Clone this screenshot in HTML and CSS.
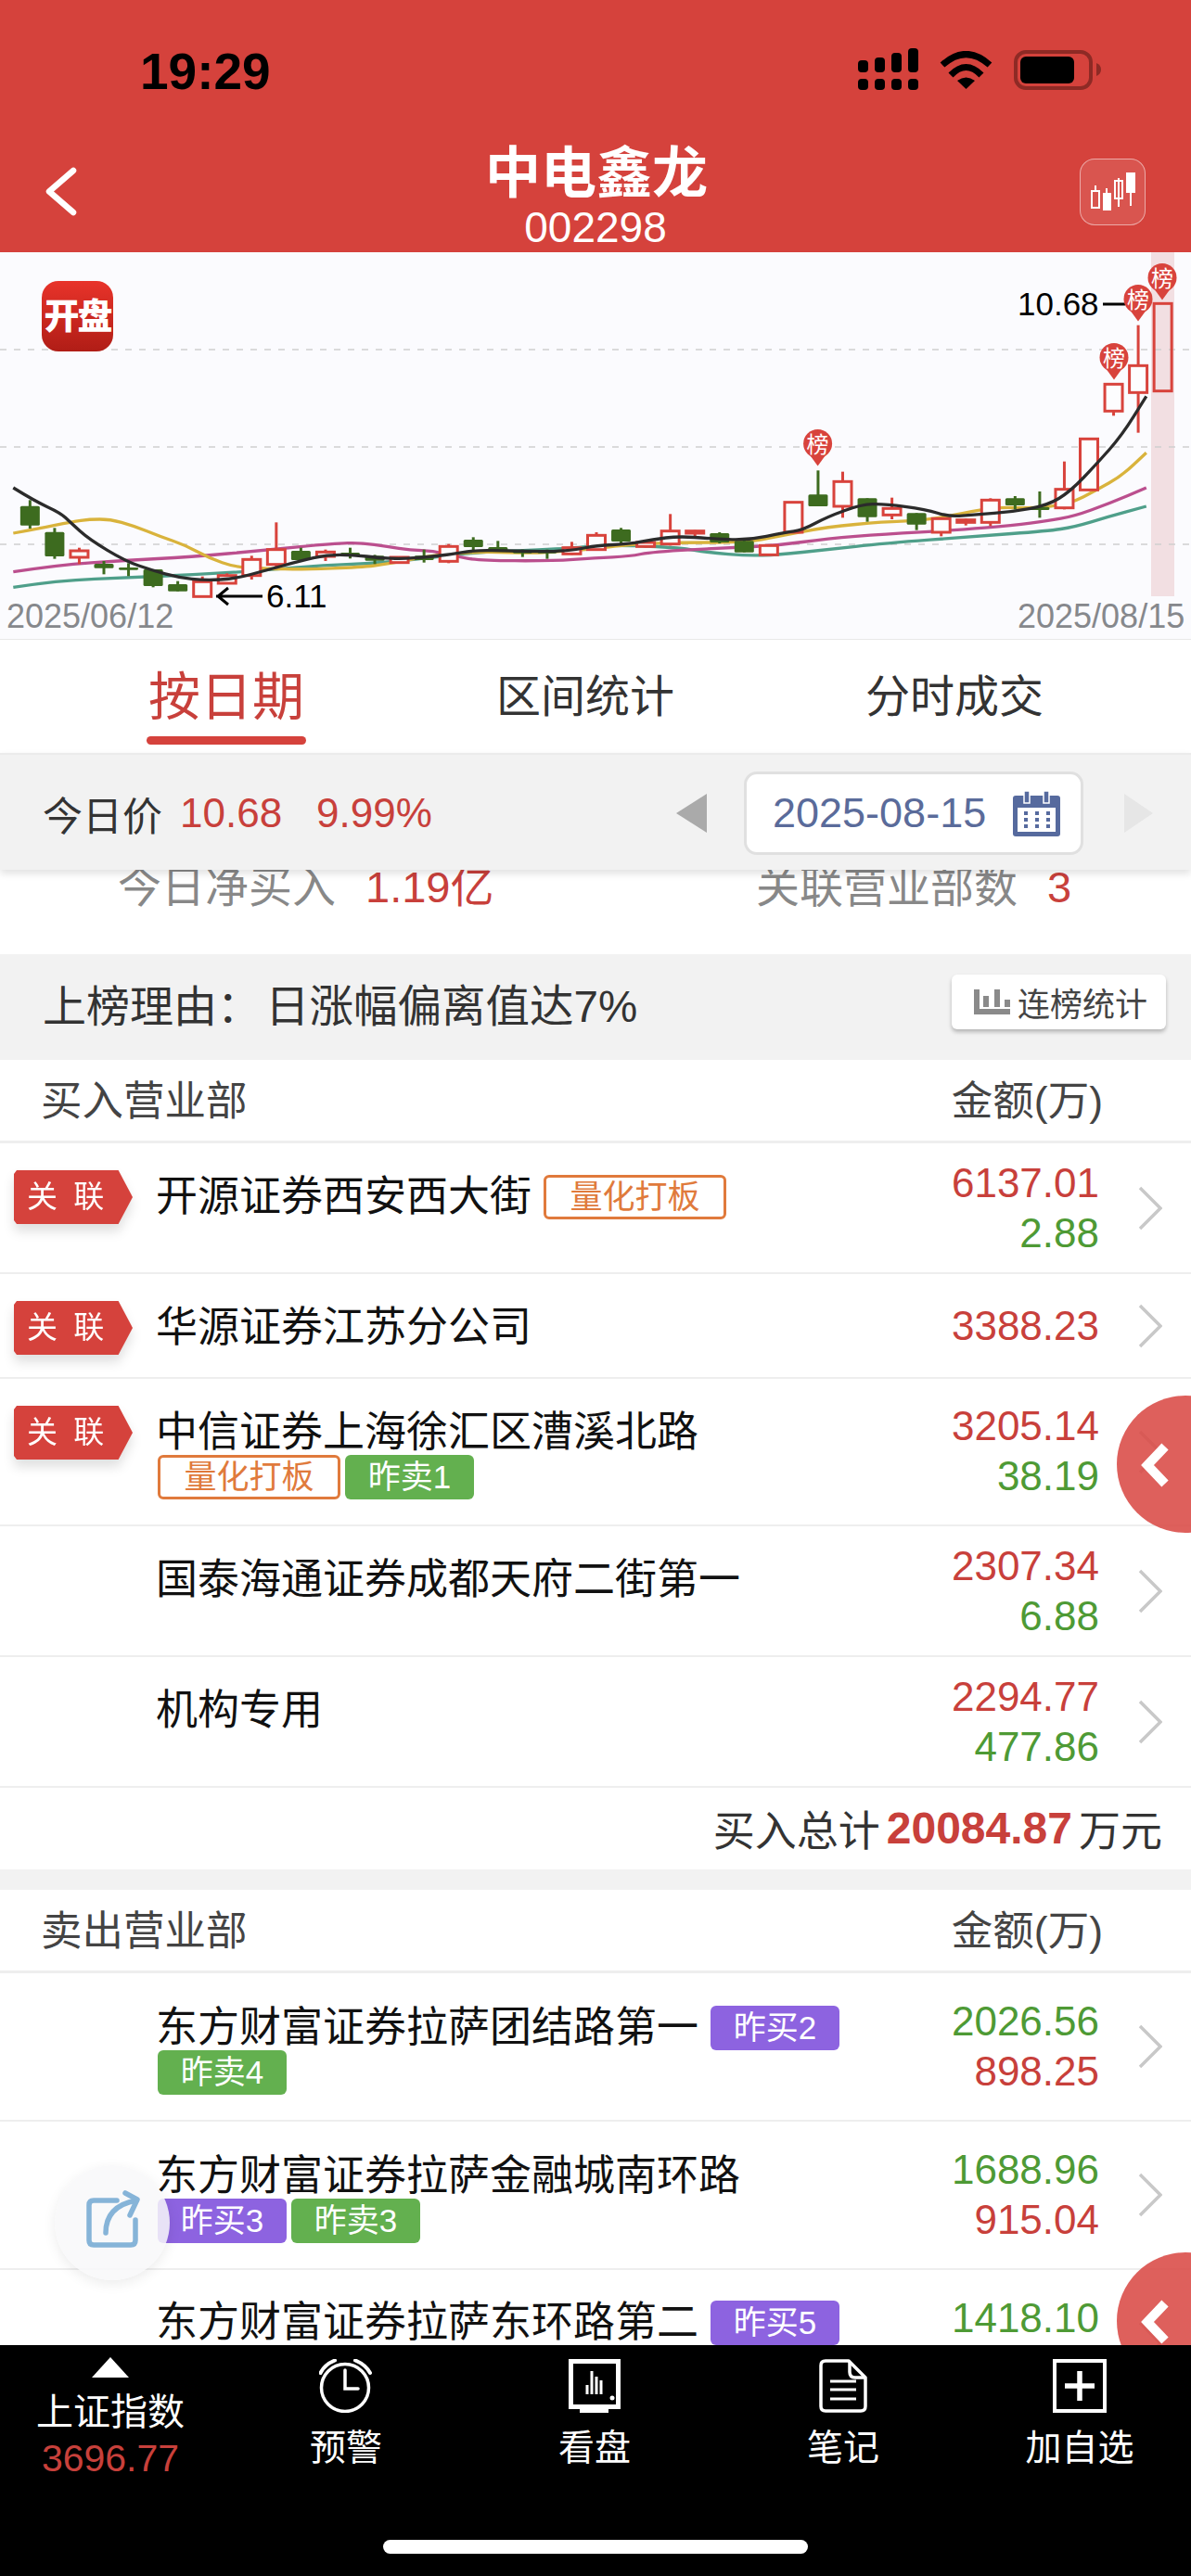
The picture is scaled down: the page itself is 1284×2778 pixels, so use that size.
FILE: index.html
```html
<!DOCTYPE html>
<html lang="zh-CN">
<head>
    <meta charset="UTF-8">
    <meta name="viewport" content="width=device-width, initial-scale=1.0">
    <title>中电鑫龙 002298</title>
    <link rel="stylesheet" href="styles.css">
</head>
<body>
    <header class="top">
        <div class="status">
            <span class="time">19:29</span>
            <svg class="ic-signal" width="66" height="46" viewBox="0 0 66 46">
                <rect x="0" y="33" width="11" height="12" rx="4"/><rect x="18" y="33" width="11" height="12" rx="4"/>
                <rect x="36" y="33" width="11" height="12" rx="4"/><rect x="54" y="33" width="11" height="12" rx="4"/>
                <rect x="0" y="13" width="11" height="13" rx="4"/><rect x="18" y="10" width="11" height="16" rx="4"/>
                <rect x="36" y="5" width="11" height="21" rx="4"/><rect x="54" y="0" width="11" height="26" rx="4"/>
            </svg>
            <svg class="ic-wifi" width="57" height="41" viewBox="0 0 57 41">
                <path d="M3 15 Q28.500 -8 54 15" fill="none" stroke="#000" stroke-width="7"/>
                <path d="M12 26 Q28.500 9 45 26" fill="none" stroke="#000" stroke-width="7"/>
                <path d="M19 32 Q28.500 25 38 32 L28.500 41 Z"/>
            </svg>
            <svg class="ic-battery" width="94" height="43" viewBox="0 0 94 43">
                <rect x="2" y="2" width="81" height="39" rx="11" fill="none" stroke="#8e2a25" stroke-width="4"/>
                <rect x="7" y="7" width="58" height="29" rx="6"/>
                <path d="M89 14 Q94 16 94 21 Q94 26 89 28 Z" fill="#8e2a25"/>
            </svg>
        </div>
        <div class="nav">
            <svg class="back" width="37" height="53" viewBox="0 0 37 53">
                <path d="M32 4 L6 26.500 L32 49" fill="none" stroke="#fff" stroke-width="6.500" stroke-linecap="round" stroke-linejoin="round"/>
            </svg>
            <div class="title">
                <div class="stock-name">中电鑫龙</div>
                <div class="stock-code">002298</div>
            </div>
            <div class="kline-btn">
                <svg width="68" height="69" viewBox="0 0 68 69" fill="none" stroke="#fff" stroke-width="2">
                    <path d="M16 28 V34 M41 20 V51 M54 30 V50"/>
                    <rect x="12" y="34" width="8" height="18"/>
                    <rect x="37" y="23" width="8" height="19"/>
                    <path d="M28 31 V37"/>
                    <rect x="24" y="36" width="9" height="19" fill="#fff" stroke="none"/>
                    <rect x="49" y="14" width="10" height="22" fill="#fff" stroke="none"/>
                </svg>
            </div>
        </div>
    </header>

    <main class="content">
        <section class="chart">
            <div class="logo">开盘</div>
            <svg id="kline" width="1284" height="417" viewBox="0 272 1284 417">
                <rect x="1241" y="272" width="25" height="371" fill="#f2dfe2"/>
                <path d="M0 377 H1284 M0 482 H1284 M0 587 H1284" stroke="#cfcfcf" stroke-width="1.500" stroke-dasharray="7 8"/>
                <g id="kline-back"></g>
                <path d="M233 643 H283 M246 634 L235 643 L246 652" fill="none" stroke="#000" stroke-width="3"/>
                <path d="M1189 328 H1213" stroke="#000" stroke-width="3"/>
                <text class="chart-price" x="287" y="655">6.11</text>
                <text class="chart-price" x="1097" y="340">10.68</text>
                <text class="chart-date" x="7" y="677">2025/06/12</text>
                <text class="chart-date" x="1097" y="677">2025/08/15</text>
                <g id="kline-pins"></g>
            </svg>
        </section>

        <nav class="tabs">
            <div class="tab active"><span>按日期</span></div>
            <div class="tab">区间统计</div>
            <div class="tab">分时成交</div>
        </nav>

        <div class="toolbar">
            <span class="price-label">今日价</span>
            <span class="price-val">10.68</span>
            <span class="price-val">9.99%</span>
            <i class="tri-left"></i>
            <div class="date-box">
                <span>2025-08-15</span>
                <svg width="51" height="49" viewBox="0 0 51 49">
                    <rect x="0" y="5" width="51" height="44" rx="3" fill="#566a9e"/>
                    <rect x="5" y="18" width="41" height="26" fill="#fff"/>
                    <rect x="12" y="0" width="6" height="13" fill="#566a9e" stroke="#fff" stroke-width="1.500"/>
                    <rect x="33" y="0" width="6" height="13" fill="#566a9e" stroke="#fff" stroke-width="1.500"/>
                    <g fill="#566a9e">
                        <rect x="12" y="22" width="4" height="4"/><rect x="24" y="22" width="4" height="4"/><rect x="36" y="22" width="4" height="4"/>
                        <rect x="12" y="29" width="4" height="4"/><rect x="24" y="29" width="4" height="4"/><rect x="36" y="29" width="4" height="4"/>
                        <rect x="12" y="36" width="4" height="4"/><rect x="24" y="36" width="4" height="4"/><rect x="36" y="36" width="4" height="4"/>
                    </g>
                </svg>
            </div>
            <i class="tri-right"></i>
        </div>

        <div class="summary">
            <div class="sum-left">今日净买入<b>1.19亿</b></div>
            <div class="sum-right">关联营业部数<b>3</b></div>
        </div>

        <div class="reason">
            <div class="reason-text">上榜理由：<span>日涨幅偏离值达7%</span></div>
            <div class="stat-btn">
                <svg width="39" height="27" viewBox="0 0 39 27" fill="#8a8a8a">
                    <path d="M0 0 H6 V21 H39 V27 H0 Z"/>
                    <rect x="10" y="7" width="6" height="12"/>
                    <rect x="22" y="0" width="6" height="19"/>
                    <rect x="33" y="11" width="6" height="8"/>
                </svg>
                连榜统计
            </div>
        </div>

        <div class="head"><span>买入营业部</span><span>金额(万)</span></div>

        <div class="row">
            <div class="flag-col"><span class="flag">关 联</span></div>
            <div class="main"><span class="firm">开源证券西安西大街</span><span class="tag quant">量化打板</span></div>
            <div class="amts"><div class="red">6137.01</div><div class="green">2.88</div></div>
            <svg class="chev" width="26" height="48" viewBox="0 0 26 48"><path d="M2 2 L24 24 L2 46"/></svg>
        </div>
        <div class="row short">
            <div class="flag-col"><span class="flag">关 联</span></div>
            <div class="main"><span class="firm">华源证券江苏分公司</span></div>
            <div class="amts"><div class="red">3388.23</div></div>
            <svg class="chev" width="26" height="48" viewBox="0 0 26 48"><path d="M2 2 L24 24 L2 46"/></svg>
        </div>
        <div class="row wide">
            <div class="flag-col"><span class="flag">关 联</span></div>
            <div class="main"><span class="firm">中信证券上海徐汇区漕溪北路</span><i class="break"></i><span class="tag quant">量化打板</span><span class="tag sold">昨卖1</span></div>
            <div class="amts"><div class="red">3205.14</div><div class="green">38.19</div></div>
            <svg class="chev" width="26" height="48" viewBox="0 0 26 48"><path d="M2 2 L24 24 L2 46"/></svg>
        </div>
        <div class="row">
            <div class="flag-col"></div>
            <div class="main"><span class="firm">国泰海通证券成都天府二街第一</span></div>
            <div class="amts"><div class="red">2307.34</div><div class="green">6.88</div></div>
            <svg class="chev" width="26" height="48" viewBox="0 0 26 48"><path d="M2 2 L24 24 L2 46"/></svg>
        </div>
        <div class="row">
            <div class="flag-col"></div>
            <div class="main"><span class="firm">机构专用</span></div>
            <div class="amts"><div class="red">2294.77</div><div class="green">477.86</div></div>
            <svg class="chev" width="26" height="48" viewBox="0 0 26 48"><path d="M2 2 L24 24 L2 46"/></svg>
        </div>

        <div class="total">买入总计<b>20084.87</b>万元</div>
        <div class="band"></div>

        <div class="head"><span>卖出营业部</span><span>金额(万)</span></div>

        <div class="row tall">
            <div class="flag-col"></div>
            <div class="main"><span class="firm">东方财富证券拉萨团结路第一</span><span class="tag bought">昨买2</span><i class="break"></i><span class="tag sold">昨卖4</span></div>
            <div class="amts"><div class="green">2026.56</div><div class="red">898.25</div></div>
            <svg class="chev" width="26" height="48" viewBox="0 0 26 48"><path d="M2 2 L24 24 L2 46"/></svg>
        </div>
        <div class="row tall">
            <div class="flag-col"></div>
            <div class="main"><span class="firm">东方财富证券拉萨金融城南环路</span><i class="break"></i><span class="tag bought">昨买3</span><span class="tag sold">昨卖3</span></div>
            <div class="amts"><div class="green">1688.96</div><div class="red">915.04</div></div>
            <svg class="chev" width="26" height="48" viewBox="0 0 26 48"><path d="M2 2 L24 24 L2 46"/></svg>
        </div>
        <div class="row tall last">
            <div class="flag-col"></div>
            <div class="main"><span class="firm">东方财富证券拉萨东环路第二</span><span class="tag bought">昨买5</span></div>
            <div class="amts"><div class="green">1418.10</div></div>
            <svg class="chev" width="26" height="48" viewBox="0 0 26 48"><path d="M2 2 L24 24 L2 46"/></svg>
        </div>

        <!-- floating buttons -->
        <div class="side-btn side-btn-1">
            <svg width="34" height="50" viewBox="0 0 34 50"><path d="M27 5 L8 25 L27 45" fill="none" stroke="#fff" stroke-width="10"/></svg>
        </div>
        <div class="side-btn side-btn-2">
            <svg width="34" height="50" viewBox="0 0 34 50"><path d="M27 5 L8 25 L27 45" fill="none" stroke="#fff" stroke-width="10"/></svg>
        </div>
        <div class="share-btn">
            <svg width="58" height="62" viewBox="0 0 58 62" fill="none" stroke="#86b4d8" stroke-width="5.500" stroke-linecap="round" stroke-linejoin="round">
                <path d="M33 11 H8 Q3 11 3 16 V54 Q3 59 8 59 H48 Q53 59 53 54 V32"/>
                <path d="M21 46 Q21 17 54 11"/>
                <path d="M42 3 L55 10 L47 27"/>
            </svg>
        </div>
    </main>

    <footer class="bottom">
        <div class="bar">
            <div class="bar-item index">
                <i class="tri-up"></i>
                <div>上证指数</div>
                <div class="index-val">3696.77</div>
            </div>
            <div class="bar-item">
                <svg width="58" height="58" viewBox="0 0 58 58" fill="none" stroke="#fff" stroke-width="3.500" stroke-linecap="round">
                    <circle cx="28" cy="31" r="25.500"/>
                    <path d="M28 12 V32 H42"/>
                    <path d="M1.500 15 Q6 6 17 1.500 M39 1.500 Q50 6 55 15" stroke-width="4"/>
                </svg>
                <div>预警</div>
            </div>
            <div class="bar-item">
                <svg width="56" height="58" viewBox="0 0 56 58" fill="none" stroke="#fff">
                    <rect x="2.500" y="2.500" width="51" height="49" stroke-width="5"/>
                    <path d="M28 52 V56" stroke-width="4"/>
                    <path d="M12 56 H43" stroke-width="4"/>
                    <path d="M20 28 V38 M25 13 V38 M30 19 V38 M35 23 V38" stroke-width="3"/>
                    <circle cx="47" cy="42" r="2.500" fill="#fff" stroke="none"/>
                </svg>
                <div>看盘</div>
            </div>
            <div class="bar-item">
                <svg width="52" height="58" viewBox="0 0 52 58" fill="none" stroke="#fff" stroke-width="3.500" stroke-linejoin="round">
                    <path d="M7 2 H32 L50 20 V51 Q50 56 45 56 H7 Q2 56 2 51 V7 Q2 2 7 2 Z"/>
                    <path d="M33 3 V14 Q33 20 39 20 H50"/>
                    <path d="M12 24 H40 M12 33 H40 M12 43 H40" stroke-width="3"/>
                </svg>
                <div>笔记</div>
            </div>
            <div class="bar-item">
                <svg width="58" height="58" viewBox="0 0 58 58" fill="none" stroke="#fff">
                    <rect x="2" y="2" width="54" height="54" stroke-width="4"/>
                    <path d="M13 29 H45 M29 13 V45" stroke-width="5.500"/>
                </svg>
                <div>加自选</div>
            </div>
        </div>
        <div class="home-bar"></div>
    </footer>

    <script src="chart.js"></script>
</body>
</html>
```

FILE: styles.css
```css
* {
    box-sizing: border-box;
}

html, body {
    margin: 0;
    padding: 0;
}

body {
    width: 1284px;
    height: 2778px;
    display: flex;
    flex-direction: column;
    overflow: hidden;
    background: #fff;
    font-family: "Liberation Sans", "Noto Sans CJK SC", sans-serif;
    color: #333;
}

/* Header */
.top {
    height: 272px;
    background: #d5423c;
    flex: none;
}

.status {
    display: flex;
    align-items: center;
    padding: 47px 97px 0 151px;
    height: 107px;
}

.time {
    font-size: 55px;
    line-height: 60px;
    font-weight: 700;
    color: #000;
    margin-right: auto;
}

.ic-signal { margin-right: 22px; margin-top: -4px; }
.ic-wifi { margin-right: 23px; margin-top: -4px; }
.ic-battery { margin-top: -4px; }

.nav {
    display: grid;
    grid-template-columns: 1fr auto 1fr;
    padding-top: 50px;
}

.back {
    margin: 23px 0 0 47px;
}

.title {
    text-align: center;
    color: #fff;
}

.stock-name {
    font-size: 60px;
    line-height: 60px;
    font-weight: 700;
    padding: 1px 0 0 2px;
}

.stock-code {
    font-size: 46px;
    line-height: 46px;
    margin-top: 4px;
}

.kline-btn {
    justify-self: end;
    width: 71px;
    height: 72px;
    margin: 14px 49px 0 0;
    border: 1.500px solid rgba(255, 255, 255, 0.5);
    border-radius: 16px;
    background: rgba(255, 255, 255, 0.1);
}

.kline-btn svg {
    display: block;
}

/* Main */
.content {
    position: relative;
    flex: 1;
    overflow: hidden;
}

/* Chart */
.chart {
    position: relative;
    height: 418px;
    background: #fbfbfe;
    border-bottom: 1px solid #e8e8e8;
}

#kline {
    display: block;
}

.logo {
    position: absolute;
    left: 45px;
    top: 31px;
    width: 77px;
    height: 76px;
    border-radius: 18px;
    background: linear-gradient(#e8332a, #b01d16);
    color: #fff;
    font-size: 38px;
    font-weight: 900;
    line-height: 76px;
    text-align: center;
    letter-spacing: -2px;
}

.chart-price {
    font-size: 35px;
    fill: #000;
}

.chart-date {
    font-size: 36px;
    fill: #86888c;
}

/* Tabs */
.tabs {
    display: grid;
    grid-template-columns: 488px 286px 1fr;
    height: 122px;
    background: #fff;
    font-size: 48px;
    line-height: 124px;
    text-align: center;
    color: #333;
}

.tab.active {
    font-size: 56px;
    color: #c8403b;
}

.tab.active span {
    position: relative;
    display: inline-block;
}

.tab.active span::after {
    content: "";
    position: absolute;
    left: -2px;
    right: -2px;
    top: 104px;
    height: 9px;
    border-radius: 5px;
    background: #d5423c;
}

/* Today bar */
.toolbar {
    position: relative;
    z-index: 2;
    display: flex;
    align-items: center;
    height: 126px;
    padding: 2px 41px 0 46px;
    background: #f2f2f2;
    border-top: 2px solid #ebebeb;
    box-shadow: 0 4px 8px rgba(0, 0, 0, 0.12);
}

.price-label {
    font-size: 43px;
    margin-right: 19px;
}

.price-val {
    font-size: 44px;
    color: #c8403b;
    margin-right: 37px;
}

.tri-left {
    margin-left: auto;
    width: 0;
    height: 0;
    border-style: solid;
    border-width: 21px 33px 21px 0;
    border-color: transparent #aaa transparent transparent;
}

.tri-right {
    width: 0;
    height: 0;
    border-style: solid;
    border-width: 21px 0 21px 31px;
    border-color: transparent transparent transparent #e6e6e6;
}

.date-box {
    display: flex;
    align-items: center;
    justify-content: space-between;
    width: 366px;
    height: 90px;
    margin: 0 44px 0 40px;
    padding: 0 22px 0 28px;
    background: #fff;
    border: 3px solid #e0e0e0;
    border-radius: 14px;
    font-size: 45px;
    color: #5a6b9a;
}

/* Net buy row, its top runs under the today bar */
.summary {
    display: flex;
    height: 97px;
    margin-top: -6px;
    padding-left: 127px;
    font-size: 47px;
    line-height: 50px;
    color: #888;
}

.summary b {
    font-weight: 400;
    color: #c8403b;
    margin-left: 32px;
}

.sum-left {
    width: 688px;
}

/* Reason */
.reason {
    display: flex;
    align-items: center;
    justify-content: space-between;
    height: 114px;
    padding: 0 27px 6px 46px;
    background: #f2f2f2;
    font-size: 47px;
}

.reason-text {
    margin-bottom: 4px;
}

.reason-text span {
    margin-left: 5px;
    font-size: 47.500px;
}

.stat-btn {
    display: flex;
    align-items: center;
    gap: 8px;
    width: 231px;
    height: 59px;
    margin-bottom: 5px;
    padding-left: 24px;
    background: #fff;
    border-radius: 6px;
    box-shadow: 0 3px 4px rgba(0, 0, 0, 0.25);
    font-size: 35px;
    color: #444;
}

/* List */
.head {
    display: flex;
    align-items: center;
    justify-content: space-between;
    height: 90px;
    padding: 0 95px 6px 44px;
    border-bottom: 3px solid #eee;
    font-size: 44.500px;
    color: #444;
}

.row {
    display: flex;
    height: 141px;
    border-bottom: 2px solid #eee;
}

.row.short { height: 113px; }
.row.wide { height: 159px; }
.row.tall { height: 160px; }

.flag-col {
    width: 168px;
    flex: none;
    padding: 29px 0 0 15px;
}

.flag {
    display: block;
    width: 128px;
    height: 58px;
    background: #d5423c;
    clip-path: polygon(0 4px, 3px 0, 88% 0, 100% 50%, 88% 100%, 3px 100%, 0 calc(100% - 4px));
    color: #fff;
    font-size: 33px;
    word-spacing: 8px;
    line-height: 58px;
    padding-left: 14px;
    white-space: nowrap;
}

.flag-col:not(:empty) {
    filter: drop-shadow(0 8px 6px rgba(0, 0, 0, 0.12));
}

.main {
    display: flex;
    flex-wrap: wrap;
    align-items: center;
    align-content: flex-start;
    flex: 1;
    padding-top: 34px;
}

.tall .main {
    padding-top: 35px;
}

/* this row is cut by the bottom bar */
.tall.last .main {
    padding-top: 33px;
}

.firm {
    font-size: 45px;
    line-height: 48px;
    color: #111;
    margin-right: 13px;
}

.break {
    flex-basis: 100%;
    height: 0;
}

.break + .tag {
    margin-left: 2px;
}

.tag {
    display: inline-block;
    width: 139px;
    height: 48px;
    margin-right: 5px;
    border-radius: 6px;
    font-size: 35px;
    line-height: 48px;
    text-align: center;
    color: #fff;
}

.tag.quant {
    width: 197px;
    background: #fff;
    border: 3px solid #e07a3c;
    line-height: 42px;
    color: #e07a3c;
}

.tag.sold { background: #63b04f; }
.tag.bought { background: #8d63e0; }

.amts {
    width: 215px;
    flex: none;
    padding-top: 16px;
    text-align: right;
    font-size: 44px;
    line-height: 54px;
}

.short .amts { padding-top: 29px; }
.wide .amts { padding-top: 24px; }
.tall .amts { padding-top: 25px; }

.red { color: #c8403b; }
.green { color: #4e9a35; }

.chev {
    flex: none;
    align-self: center;
    margin: 0 31px 0 42px;
    fill: none;
    stroke: #c8c8c8;
    stroke-width: 3.500;
}

.total {
    display: flex;
    align-items: center;
    justify-content: flex-end;
    height: 88px;
    padding: 0 31px 2px 0;
    font-size: 45px;
    color: #333;
}

.total b {
    font-size: 48px;
    color: #c8403b;
    margin: 0 7px;
}

.band {
    height: 22px;
    background: #f2f2f2;
}

/* Floating buttons */
.side-btn {
    position: absolute;
    left: 1204px;
    width: 148px;
    height: 148px;
    border-radius: 50%;
    background: rgba(218, 74, 69, 0.88);
}

.side-btn svg {
    position: absolute;
    left: 25px;
    top: 50px;
}

.side-btn-1 { top: 1233px; }
.side-btn-2 { top: 2157px; }

.share-btn {
    position: absolute;
    left: 59px;
    top: 2063px;
    width: 124px;
    height: 124px;
    border-radius: 50%;
    background: rgba(248, 248, 249, 0.85);
    box-shadow: 0 4px 14px rgba(0, 0, 0, 0.08);
}

.share-btn svg {
    position: absolute;
    left: 34px;
    top: 27px;
}

/* Bottom bar */
.bottom {
    flex: none;
    height: 249px;
    background: #000;
    color: #fff;
}

.bar {
    display: grid;
    grid-template-columns: 238px 270px 266px 270px 240px;
    height: 210px;
}

.bar-item {
    display: flex;
    flex-direction: column;
    align-items: center;
    padding-top: 15px;
    font-size: 39px;
    line-height: 50px;
}

.bar-item svg {
    margin-bottom: 13px;
}

.bar-item.index {
    padding-top: 13px;
    font-size: 40px;
}

.tri-up {
    width: 0;
    height: 0;
    margin-bottom: 12px;
    border-style: solid;
    border-width: 0 20px 22px 20px;
    border-color: transparent transparent #fff transparent;
}

.index-val {
    font-size: 41px;
    color: #c8403b;
}

.home-bar {
    width: 458px;
    height: 15px;
    margin: 0 auto;
    border-radius: 8px;
    background: #fff;
}
```

FILE: chart.js
```js
// Values are read off the picture: x in candle slots, prices as raw y units
const toY = v => 270 + v / 3;
const slotX = i => 32.35 + i * 26.55;
const leftX = x => x / 2.442;
const rightX = x => 642 + x / 2.442;

// [colour, body top, body bottom, wick top, wick bottom]
const candles = [
    ['g', 827, 890, 808, 900], ['g', 911, 990, 898, 998], ['r', 972, 993, 962, 1015], ['g', 1014, 1028, 1005, 1048],
    ['g', 1026, 1034, 1012, 1054], ['g', 1032, 1086, 1032, 1090], ['g', 1080, 1103, 1070, 1103], ['r', 1072, 1120, 1055, 1120],
    ['r', 1052, 1077, 1045, 1080], ['r', 1000, 1052, 988, 1065], ['r', 968, 1016, 880, 1030], ['g', 972, 1002, 962, 1002],
    ['r', 976, 990, 968, 1005], ['g', 978, 990, 962, 997], ['g', 988, 1004, 985, 1015], ['r', 993, 1010, 993, 1010],
    ['g', 988, 1002, 968, 1010], ['r', 958, 1006, 950, 1012], ['g', 936, 960, 928, 975], ['g', 960, 972, 940, 975],
    ['g', 972, 980, 968, 992], ['g', 972, 980, 968, 998], ['r', 962, 982, 943, 985], ['r', 922, 968, 912, 972],
    ['g', 903, 942, 898, 950], ['r', 945, 958, 940, 962], ['r', 908, 950, 853, 955], ['r', 908, 915, 905, 932],
    ['g', 915, 945, 912, 948], ['g', 940, 977, 938, 977], ['r', 955, 985, 955, 985], ['r', 815, 912, 815, 915],
    ['g', 790, 828, 712, 828], ['r', 748, 828, 716, 865], ['g', 802, 863, 802, 878], ['r', 835, 856, 800, 870],
    ['g', 850, 887, 850, 905], ['r', 868, 912, 868, 925], ['r', 872, 880, 868, 890], ['r', 808, 880, 802, 892],
    ['g', 802, 825, 795, 838], ['g', 830, 840, 780, 865], ['r', 773, 833, 683, 838], ['r', 610, 775, 610, 778],
    ['r', 433, 520, 433, 535], ['r', 373, 460, 242, 590], ['r', 172, 455, 172, 455]
];

const ma5 = {
    color: '#2b2b2b',
    left: [[35, 768], [90, 810], [160, 850], [185, 880], [235, 935], [330, 1005], [400, 1035], [470, 1058], [540, 1068], [620, 1062], [700, 1035], [790, 1005], [860, 985], [930, 985], [1000, 995], [1060, 998], [1120, 992], [1180, 985], [1250, 970], [1340, 972], [1450, 975], [1520, 968]],
    right: [[0, 955], [90, 950], [150, 935], [220, 925], [300, 932], [400, 938], [500, 912], [545, 905], [610, 862], [700, 822], [760, 820], [870, 838], [930, 862], [1000, 855], [1100, 845], [1190, 825], [1250, 780], [1320, 690], [1385, 600], [1450, 472]]
};
const ma10 = {
    color: '#d9b33c',
    left: [[35, 915], [100, 900], [190, 878], [235, 870], [290, 870], [350, 890], [420, 925], [490, 955], [550, 995], [620, 1025], [700, 1030], [800, 1032], [950, 1025], [1020, 1015], [1120, 990], [1200, 980], [1280, 975], [1400, 980], [1500, 972]],
    right: [[0, 965], [100, 950], [230, 945], [400, 945], [480, 925], [610, 895], [760, 878], [850, 875], [930, 860], [1050, 830], [1150, 835], [1250, 820], [1320, 775], [1385, 730], [1450, 655]]
};
const ma20 = {
    color: '#bb4f8e',
    left: [[35, 1040], [150, 1018], [330, 1003], [500, 992], [700, 970], [880, 948], [950, 946], [1020, 958], [1080, 970], [1140, 972], [1200, 990], [1260, 1003], [1450, 1005]],
    right: [[0, 995], [90, 990], [150, 975], [350, 962], [480, 955], [610, 932], [760, 918], [950, 905], [1100, 890], [1190, 875], [1260, 860], [1350, 820], [1450, 768]]
};
const ma30 = {
    color: '#4f9f8a',
    left: [[35, 1090], [150, 1068], [350, 1058], [530, 1048], [700, 1035], [850, 1018], [1000, 1012], [1120, 995], [1200, 985], [1280, 975], [1500, 965]],
    right: [[0, 955], [100, 955], [220, 962], [300, 978], [400, 988], [480, 985], [610, 968], [760, 948], [1000, 925], [1190, 908], [1260, 895], [1350, 862], [1450, 828]]
};

// Pin heads, one per time on the list: [x, y of head centre]
const pins = [[881.6, 478.5], [1201, 385.5], [1227, 322.5], [1253, 299.5]];

function maPath(ma) {
    const pts = ma.left.map(p => [leftX(p[0]), toY(p[1])])
        .concat(ma.right.map(p => [rightX(p[0]), toY(p[1])]));
    let d = 'M' + pts[0][0].toFixed(1) + ' ' + pts[0][1].toFixed(1);
    for (let i = 1; i < pts.length - 1; i++) {
        const mx = (pts[i][0] + pts[i + 1][0]) / 2;
        const my = (pts[i][1] + pts[i + 1][1]) / 2;
        d += ` Q${pts[i][0].toFixed(1)} ${pts[i][1].toFixed(1)} ${mx.toFixed(1)} ${my.toFixed(1)}`;
    }
    const last = pts[pts.length - 1];
    d += ` L${last[0].toFixed(1)} ${last[1].toFixed(1)}`;
    return `<path d="${d}" fill="none" stroke="${ma.color}" stroke-width="3.300"/>`;
}

function candleMarkup(c, i) {
    const x = slotX(i);
    const top = toY(c[1]);
    const bottom = toY(c[2]);
    const wick = `M${x} ${toY(c[3])} V${toY(c[4])}`;
    if (c[0] === 'g') {
        return `<path d="${wick}" stroke="#3d6b1f" stroke-width="3"/>` +
            `<rect x="${x - 10.5}" y="${top}" width="21" height="${bottom - top}" rx="1.500" fill="#3d6b1f"/>`;
    }
    // last candle sits on the highlight band, so it stays see-through and has no wick
    const isLast = i === candles.length - 1;
    const body = `<rect x="${x - 9.5}" y="${top}" width="19" height="${bottom - top}" fill="${isLast ? 'none' : '#fdfdfe'}" stroke="#d8433c" stroke-width="3"/>`;
    return isLast ? body : `<path d="${wick}" stroke="#d8433c" stroke-width="3"/>` + body;
}

document.getElementById('kline-back').innerHTML =
    maPath(ma30) + maPath(ma20) + maPath(ma10) + candles.map(candleMarkup).join('') + maPath(ma5);

document.getElementById('kline-pins').innerHTML = pins.map(p =>
    `<path d="M${p[0] - 8} ${p[1] + 13} L${p[0]} ${p[1] + 24} L${p[0] + 8} ${p[1] + 13} Z" fill="#d8433c"/>` +
    `<circle cx="${p[0]}" cy="${p[1]}" r="15.5" fill="#d8433c"/>` +
    `<text x="${p[0]}" y="${p[1] + 9}" text-anchor="middle" font-size="24" fill="#fff">榜</text>`
).join('');
```
